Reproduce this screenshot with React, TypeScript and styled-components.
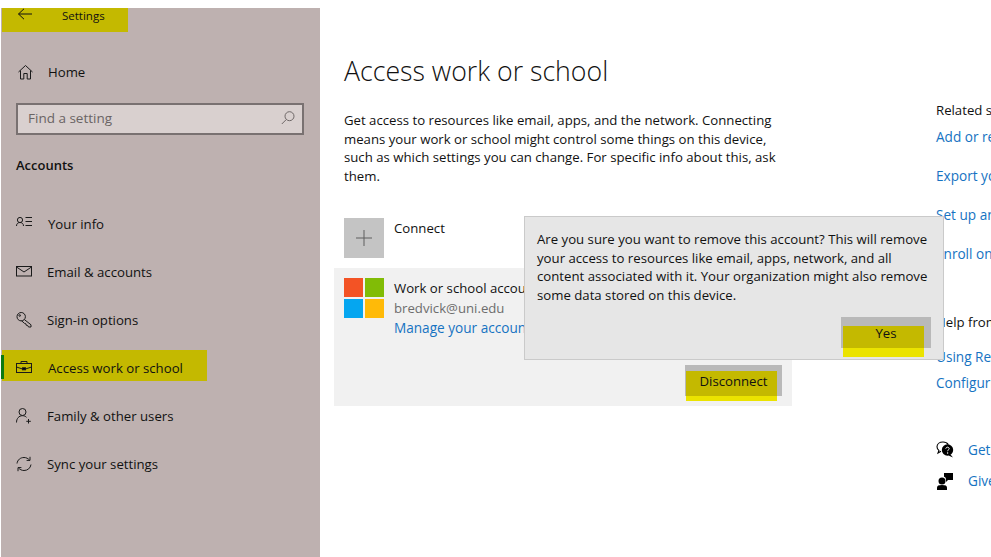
import React from 'react';
import styled, { createGlobalStyle } from 'styled-components';

const menuItems = [
    { key: 'info', label: 'Your info', wide: true },
    { key: 'email', label: 'Email & accounts' },
    { key: 'key', label: 'Sign-in options' },
    { key: 'work', label: 'Access work or school', wide: true, active: true },
    { key: 'family', label: 'Family & other users' },
    { key: 'sync', label: 'Sync your settings' },
];

const relatedLinks = ['Add or remove a provisioning package', 'Export your management log files', 'Set up an account for taking tests', 'Enroll only in device management'];

const MenuIcon: React.FC<{ name: string }> = ({ name }) => (
    <IconSvg viewBox="0 0 16 16">
        {name === 'info' && (
            <>
                <circle cx="4" cy="4" r="2.6" />
                <path d="M0.5 10c0-2.4 1.6-3.5 3.5-3.5S7.500 7.600 7.500 10" />
                <path d="M9.500 1.500H16M9.500 5.500H16M9.500 9.500H16" />
            </>
        )}
        {name === 'email' && (
            <>
                <rect x="0.5" y="2.500" width="15" height="9.500" />
                <path d="M0.500 3l7.500 5 7.500-5" />
            </>
        )}
        {name === 'key' && (
            <>
                <circle cx="5.200" cy="4.700" r="4.200" />
                <circle cx="3.700" cy="3.500" r="0.8" />
                <path d="M8.300 7.500l6.700 5.300v2.200h-2.500l-.8-1.500-1.500-.3-.3-1.400-1.400-.4-3-2.700" />
            </>
        )}
        {name === 'work' && (
            <>
                <rect x="0.5" y="3.500" width="15" height="9" />
                <path d="M5 3.500V1.500h6v2M0.500 7l6 2M15.500 7l-6 2" />
                <rect x="6.500" y="7.800" width="3" height="2" fill="#000" />
            </>
        )}
        {name === 'family' && (
            <>
                <circle cx="6.500" cy="4" r="3.500" />
                <path d="M0.500 14.500c0-4 2.400-6.800 6-6.800 1.700 0 3 .6 4 1.600" />
                <path d="M12.500 11v4.500M10.300 13.300h4.500" />
            </>
        )}
        {name === 'sync' && (
            <>
                <path d="M1 7.500C1.500 3.800 4.400 1.500 8 1.500c2.200 0 4.200 1 5.500 2.600" />
                <path d="M14 .8v3.600h-3.400" />
                <path d="M15 8.500c-.5 3.700-3.400 6-7 6-2.200 0-4.200-1-5.500-2.600" />
                <path d="M2 15.200v-3.600h3.400" />
            </>
        )}
    </IconSvg>
);

const App: React.FC = () => {
    return (
        <Page>
            <GlobalStyle />
            <Sidebar>
                <TitleBand>
                    <svg width="16" height="14" viewBox="0 0 16 14" fill="none" stroke="#111" strokeWidth="1">
                        <path d="M15 6H1.500M7 .8L1.500 6 7 11.200" />
                    </svg>
                    <TitleText>Settings</TitleText>
                </TitleBand>
                <HomeRow>
                    <IconSvg viewBox="0 0 16 16">
                        <path d="M1.500 8L8.500 1.500l7 6.500M3.500 6.500V15h3.300V9.500h3.400V15h3.300V6.500" />
                    </IconSvg>
                    <MenuLabel>Home</MenuLabel>
                </HomeRow>
                <SearchBox>
                    <SearchHint>Find a setting</SearchHint>
                    <svg width="14" height="14" viewBox="0 0 14 14" fill="none" stroke="#6e6767" strokeWidth="1">
                        <circle cx="8.500" cy="5.200" r="4.500" />
                        <path d="M5.300 8.500L.8 13" />
                    </svg>
                </SearchBox>
                <SectionName>Accounts</SectionName>
                <Menu>
                    {menuItems.map((item) => (
                        <MenuRow key={item.key} $active={item.active}>
                            <MenuIcon name={item.key} />
                            <MenuLabel $wide={item.wide}>{item.label}</MenuLabel>
                        </MenuRow>
                    ))}
                </Menu>
            </Sidebar>
            <Main>
                <Content>
                    <Heading>Access work or school</Heading>
                    <Intro>
                        Get access to resources like email, apps, and the network. Connecting
                        means your work or school might control some things on this device,
                        such as which settings you can change. For specific info about this, ask
                        them.
                    </Intro>
                    <ConnectRow>
                        <PlusTile>
                            <svg width="16" height="16" viewBox="0 0 16 16" stroke="#5f5f5f" strokeWidth="1">
                                <path d="M8 0v16M0 8h16" />
                            </svg>
                        </PlusTile>
                        <span>Connect</span>
                    </ConnectRow>
                    <AccountCard>
                        <AccountRow>
                            <Logo>
                                <LogoPart $color="#f35325" />
                                <LogoPart $color="#81bc06" />
                                <LogoPart $color="#05a6f0" />
                                <LogoPart $color="#ffba08" />
                            </Logo>
                            <AccountText>
                                <div>Work or school account</div>
                                <Muted>bredvick@uni.edu</Muted>
                                <BlueLink>Manage your account</BlueLink>
                            </AccountText>
                        </AccountRow>
                        <CardFooter>
                            <MarkedButton $width={97} $markWidth={91} $markLeft={1} $markTop={6} $markDark={25} $markBright={5}>
                                <span>Disconnect</span>
                            </MarkedButton>
                        </CardFooter>
                    </AccountCard>
                </Content>
                <Related>
                    <SideHeading>Related settings</SideHeading>
                    <SideLinks>
                        {relatedLinks.map((link) => (
                            <BlueLink key={link}>{link}</BlueLink>
                        ))}
                    </SideLinks>
                    <HelpHeading>Help from the web</HelpHeading>
                    <UsingLink>Using Remote Desktop</UsingLink>
                    <ConfigureLink>Configuring VPN</ConfigureLink>
                    <GetHelpRow>
                        <svg width="18" height="18" viewBox="0 0 18 18">
                            <path d="M7 1C3.500 1 1 3 1 5.800c0 1.500.7 2.700 1.900 3.600L2 12l3-1.700" fill="none" stroke="#000" strokeWidth="1.100" />
                            <path d="M7 1c2.400 0 4.300 1 5.300 2.600" fill="none" stroke="#000" strokeWidth="1.100" />
                            <circle cx="11.500" cy="9" r="5.700" fill="#000" />
                            <path d="M14.500 13.500l2.500 3-4.500-2z" fill="#000" />
                            <path d="M9.800 7.700c.1-1 .9-1.500 1.700-1.500s1.700.5 1.700 1.400c0 1.300-1.600 1.200-1.600 2.600" fill="none" stroke="#fff" strokeWidth="1" />
                            <circle cx="11.600" cy="12" r=".7" fill="#fff" />
                        </svg>
                        <BlueLink>Get help</BlueLink>
                    </GetHelpRow>
                    <FeedbackRow>
                        <svg width="18" height="18" viewBox="0 0 18 18" fill="#000">
                            <circle cx="6" cy="9" r="3.500" />
                            <path d="M1 18v-2.500C1 13.800 2.500 13 6 13s5 .8 5 2.500V18z" />
                            <path d="M8 1h9v7h-5l-2 2V7.500C10 6 9 5 8 4.800z" />
                        </svg>
                        <BlueLink>Give feedback</BlueLink>
                    </FeedbackRow>
                </Related>
            </Main>
            <Dialog>
                <DialogText>
                    Are you sure you want to remove this account? This will remove
                    your access to resources like email, apps, network, and all
                    content associated with it. Your organization might also remove
                    some data stored on this device.
                </DialogText>
                <DialogFooter>
                    <MarkedButton $width={90} $markWidth={81} $markLeft={2} $markTop={9} $markDark={22} $markBright={9}>
                        <span>Yes</span>
                    </MarkedButton>
                </DialogFooter>
            </Dialog>
        </Page>
    );
};

const GlobalStyle = createGlobalStyle`
    html, body {
        margin: 0;
        padding: 0;
        background: #fff;
        overflow: hidden;
    }
    body {
        font-family: "Open Sans", "Noto Sans", sans-serif;
        font-size: 13.2px;
        line-height: 20px;
        color: #111;
    }
`;

const Page = styled.div`
    position: relative;
    display: flex;
    width: 991px;
    height: 557px;
    overflow: hidden;
`;

const Sidebar = styled.aside`
    box-sizing: border-box;
    flex: 0 0 319px;
    height: 549px;
    margin: 8px 0 0 1px;
    background: #beb1b0;
`;

const TitleBand = styled.div`
    display: flex;
    align-items: flex-start;
    width: 126px;
    height: 24px;
    margin-left: 1px;
    background: #c4b900;
    padding-left: 15px;
    box-sizing: border-box;
`;

const TitleText = styled.span`
    margin-left: 29px;
    font-size: 11.500px;
    line-height: 16px;
`;

const IconSvg = styled.svg`
    flex: 0 0 16px;
    width: 16px;
    height: 16px;
    fill: none;
    stroke: #1a1a1a;
    stroke-width: 1;
`;

const MenuLabel = styled.span<{ $wide?: boolean }>`
    position: relative;
    margin-left: ${(p) => (p.$wide ? '16px' : '15px')};
    white-space: nowrap;
`;

const HomeRow = styled.div`
    display: flex;
    align-items: center;
    height: 48px;
    margin-top: 16px;
    padding-left: 16px;
`;

const SearchBox = styled.div`
    box-sizing: border-box;
    display: flex;
    align-items: center;
    justify-content: space-between;
    width: 288px;
    height: 32px;
    margin: 7px 0 0 15px;
    padding: 0 7px 2px 10px;
    background: #d9d0cf;
    border: 2px solid #797171;
`;

const SearchHint = styled.span`
    color: #6a6464;
    font-size: 13.5px;
`;

const SectionName = styled.div`
    margin: 20px 0 0 15px;
    font-weight: 600;
    font-size: 13px;
`;

const Menu = styled.nav`
    margin-top: 25px;
`;

const MenuRow = styled.div<{ $active?: boolean }>`
    position: relative;
    display: flex;
    align-items: center;
    height: 48px;
    padding-left: 15px;

    ${(p) => p.$active && `
        &::before {
            content: '';
            position: absolute;
            left: 1px;
            top: 6px;
            width: 205px;
            height: 31px;
            background: #c4b900;
        }
        &::after {
            content: '';
            position: absolute;
            left: 0;
            top: 11px;
            width: 3px;
            height: 24px;
            background: #0a7a12;
        }
        svg {
            position: relative;
        }
    `}
`;

const Main = styled.main`
    display: flex;
    flex: 1;
    min-width: 0;
    padding-left: 24px;
`;

const Content = styled.div`
    flex: 0 0 592px;
`;

const Heading = styled.h1`
    margin: 52px 0 0;
    font-size: 26.7px;
    font-weight: 300;
    line-height: 38px;
    color: #111;
`;

const Intro = styled.p`
    width: 440px;
    margin: 21px 0 0;
    line-height: 18.5px;
`;

const ConnectRow = styled.div`
    display: flex;
    align-items: flex-start;
    gap: 10px;
    margin-top: 33px;
`;

const PlusTile = styled.div`
    display: flex;
    align-items: center;
    justify-content: center;
    width: 40px;
    height: 40px;
    background: #c4c4c4;
`;

const AccountCard = styled.section`
    box-sizing: border-box;
    display: flex;
    flex-direction: column;
    width: 458px;
    height: 138px;
    margin: 10px 0 0 -10px;
    padding: 10px;
    background: #f1f1f1;
`;

const AccountRow = styled.div`
    display: flex;
    gap: 10px;
`;

const Logo = styled.div`
    display: grid;
    grid-template-columns: 19px 19px;
    grid-template-rows: 19px 19px;
    gap: 2px;
    width: 40px;
    height: 40px;
`;

const LogoPart = styled.div<{ $color: string }>`
    background: ${(p) => p.$color};
`;

const AccountText = styled.div`
    white-space: nowrap;
`;

const Muted = styled.div`
    color: #6d6d6d;
`;

const BlueLink = styled.div`
    color: #1673c2;
    font-size: 13.6px;
    white-space: nowrap;
`;

const CardFooter = styled.div`
    display: flex;
    justify-content: flex-end;
    margin-top: auto;
`;

const MarkedButton = styled.div<{ $width: number; $markWidth: number; $markLeft: number; $markTop: number; $markDark: number; $markBright: number }>`
    position: relative;
    display: flex;
    align-items: center;
    justify-content: center;
    width: ${(p) => p.$width}px;
    height: 31px;
    background: #b9b9b9;

    &::before {
        content: '';
        position: absolute;
        left: ${(p) => p.$markLeft}px;
        top: ${(p) => p.$markTop}px;
        width: ${(p) => p.$markWidth}px;
        height: ${(p) => p.$markDark}px;
        background: #c4b900;
    }

    &::after {
        content: '';
        position: absolute;
        left: ${(p) => p.$markLeft}px;
        top: ${(p) => p.$markTop + p.$markDark}px;
        width: ${(p) => p.$markWidth}px;
        height: ${(p) => p.$markBright}px;
        background: #ebe300;
    }

    span {
        position: relative;
        z-index: 1;
    }
`;

const Related = styled.div`
    flex: none;
    white-space: nowrap;
`;

const SideHeading = styled.div`
    margin-top: 100px;
`;

const SideLinks = styled.div`
    display: flex;
    flex-direction: column;
    gap: 19px;
    margin-top: 7px;
`;

const HelpHeading = styled.div`
    margin-top: 48px;
`;

const UsingLink = styled(BlueLink)`
    margin-top: 15px;
`;

const ConfigureLink = styled(BlueLink)`
    margin-top: 6px;
`;

const GetHelpRow = styled.div`
    display: flex;
    align-items: center;
    gap: 14px;
    margin-top: 47px;
`;

const FeedbackRow = styled(GetHelpRow)`
    margin-top: 11px;
`;

const Dialog = styled.div`
    position: absolute;
    left: 524px;
    top: 216px;
    box-sizing: border-box;
    display: flex;
    flex-direction: column;
    width: 420px;
    height: 144px;
    padding: 14px 12px 11px 12px;
    background: #e6e6e6;
    border: 1px solid #cacaca;
`;

const DialogText = styled.p`
    margin: -1px 0 0;
    width: 396px;
    line-height: 18.5px;
`;

const DialogFooter = styled.div`
    display: flex;
    justify-content: flex-end;
    margin-top: auto;
`;

export default App;
